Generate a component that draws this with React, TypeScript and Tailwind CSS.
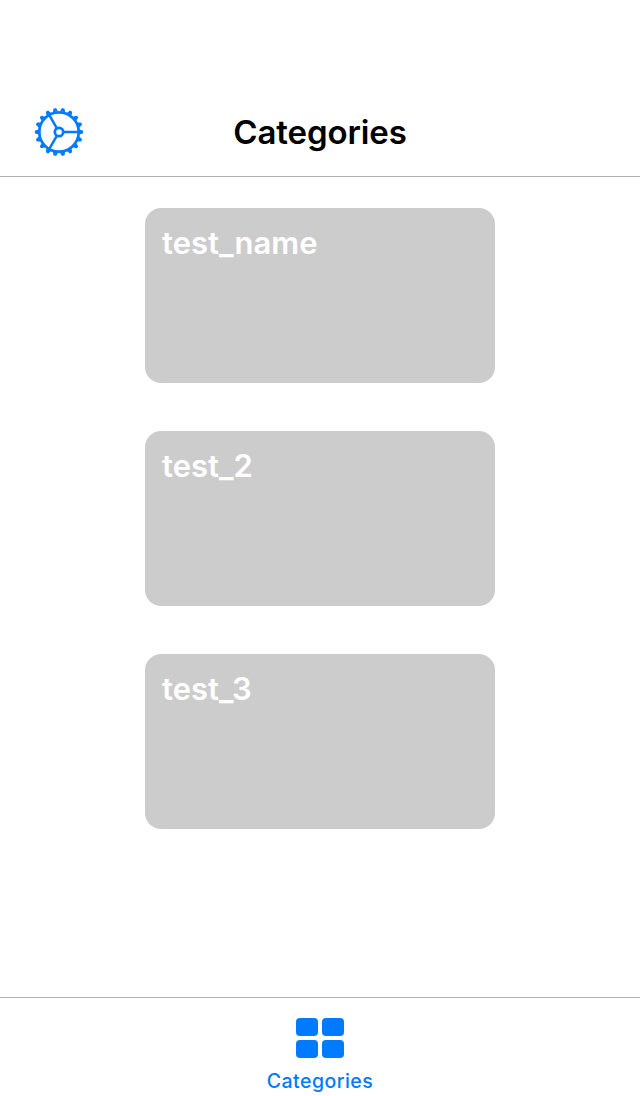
import React from "react";

const cards = ["test_name", "test_2", "test_3"];
const teeth = Array.from({ length: 18 }, (_, i) => i * 20 + 10);

function Gear() {
  return (
    <svg width="50" height="50" viewBox="-25 -25 50 50" className="text-[#007aff]" fill="none" stroke="currentColor">
      <circle r="19.7" strokeWidth="2.7" />
      {teeth.map((a) => (
        <path key={a} transform={`rotate(${a})`} d="M-2.6 -20.5L-1.5 -23.6Q-1.3 -24.1 -.8 -24.1H.8Q1.3 -24.1 1.5 -23.6L2.6 -20.5Z" fill="currentColor" stroke="none" />
      ))}
      <circle r="4.2" strokeWidth="2.7" />
      <path strokeWidth="2.5" d="M5 0H19M-2.5 -4.3L-9.7 -16.8M-2.5 4.3L-9.7 16.8" />
    </svg>
  );
}

export default function App() {
  return (
    <div className="flex h-[1096px] w-[640px] flex-col bg-white font-['Inter',sans-serif]">
      <header className="grid h-[177px] shrink-0 grid-cols-[1fr_auto_1fr] items-center border-b border-[#b2b2b2] px-[34px] pt-[88px]">
        <button aria-label="Settings"><Gear /></button>
        <h1 className="text-[33px] leading-[40px] font-semibold tracking-[-0.1px] text-black">Categories</h1>
      </header>
      <main className="flex flex-1 flex-col items-center gap-12 pt-[31px]">
        {cards.map((name) => (
          <section key={name} className="h-[175px] w-[350px] rounded-2xl bg-[#cccccc] px-[17px] pt-[15px] text-[31px] leading-[40px] font-semibold text-white">
            {name}
          </section>
        ))}
      </main>
      <nav className="flex h-[99px] shrink-0 flex-col items-center border-t border-[#b2b2b2] pt-5 text-[#007aff]">
        <div className="grid grid-cols-2 gap-1">
          {[0, 1, 2, 3].map((i) => <span key={i} className="h-[18px] w-[22px] rounded-[4px] bg-[#007aff]" />)}
        </div>
        <span className="mt-[11px] text-[19.5px] leading-[24px] font-medium tracking-[0.45px]">Categories</span>
      </nav>
    </div>
  );
}
